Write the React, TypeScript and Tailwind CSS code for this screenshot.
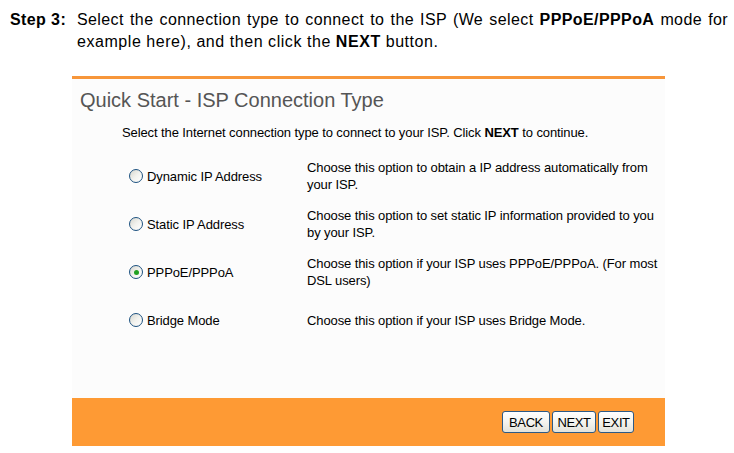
import React from 'react';

const options = [
  { label: 'Dynamic IP Address', desc: ['Choose this option to obtain a IP address automatically from', 'your ISP.'], checked: false },
  { label: 'Static IP Address', desc: ['Choose this option to set static IP information provided to you', 'by your ISP.'], checked: false },
  { label: 'PPPoE/PPPoA', desc: ['Choose this option if your ISP uses PPPoE/PPPoA. (For most', 'DSL users)'], checked: true },
  { label: 'Bridge Mode', desc: ['Choose this option if your ISP uses Bridge Mode.'], checked: false },
];

function Radio({ checked }: { checked: boolean }) {
  return (
    <div className="w-[14px] h-[14px] rounded-full border border-[#1c5180] bg-gradient-to-br from-[#d6d6ce] via-[#f2f2ee] to-white flex items-center justify-center shrink-0">
      {checked && <div className="w-[5px] h-[5px] rounded-full bg-[#21a121]" />}
    </div>
  );
}

function XpButton({ children, w }: { children: React.ReactNode; w: string }) {
  return (
    <button className={`${w} h-[22px] rounded-[3px] border border-[#2d5a86] bg-gradient-to-b from-white via-[#f5f4ef] to-[#e3e2da] text-[13px] text-black leading-none tracking-[-0.4px]`}>
      {children}
    </button>
  );
}

export default function App() {
  return (
    <div className="w-[734px] h-[453px] bg-white overflow-hidden font-['Liberation_Sans',Arial,sans-serif]">
      {/* instruction text */}
      <div className="flex pt-[9px] text-[16px] leading-[22px] text-black tracking-[0.4px]">
        <div className="w-[77px] pl-[10px] font-bold shrink-0">Step 3:</div>
        <div className="w-[651px]">
          <div className="text-justify [text-align-last:justify] whitespace-nowrap">
            Select the connection type to connect to the ISP (We select <b>PPPoE/PPPoA</b> mode for
          </div>
          <div className="tracking-[0.55px]">
            example here), and then click the <b>NEXT</b> button.
          </div>
        </div>
      </div>

      {/* router panel */}
      <div className="ml-[72px] mt-[23px] w-[593px] border-t-[3px] border-[#f7963a] bg-[#fcfcfc]">
        <div className="pt-[9px] pl-[8px] text-[20px] leading-[24px] text-[#555555]">
          Quick Start - ISP Connection Type
        </div>
        <div className="mt-[13px] pl-[50px] text-[13px] leading-[16px] text-black tracking-[-0.1px]">
          Select the Internet connection type to connect to your ISP. Click <b>NEXT</b> to continue.
        </div>

        <div className="mt-[11px] text-[13px] leading-[17px] text-black tracking-[-0.1px]">
          {options.map((o) => (
            <div key={o.label} className="h-[48px] flex items-center">
              <div className="w-[235px] pl-[57px] flex items-center gap-[4px]">
                <Radio checked={o.checked} />
                <span className="mt-[1px]">{o.label}</span>
              </div>
              <div>
                {o.desc.map((line) => (
                  <div key={line}>{line}</div>
                ))}
              </div>
            </div>
          ))}
        </div>

        <div className="h-[54px]" />

        <div className="h-[48px] bg-[#fe9a34] flex items-center justify-end gap-[2px] pr-[31px]">
          <XpButton w="w-[48px]">BACK</XpButton>
          <XpButton w="w-[44px]">NEXT</XpButton>
          <XpButton w="w-[36px]">EXIT</XpButton>
        </div>
      </div>
    </div>
  );
}
